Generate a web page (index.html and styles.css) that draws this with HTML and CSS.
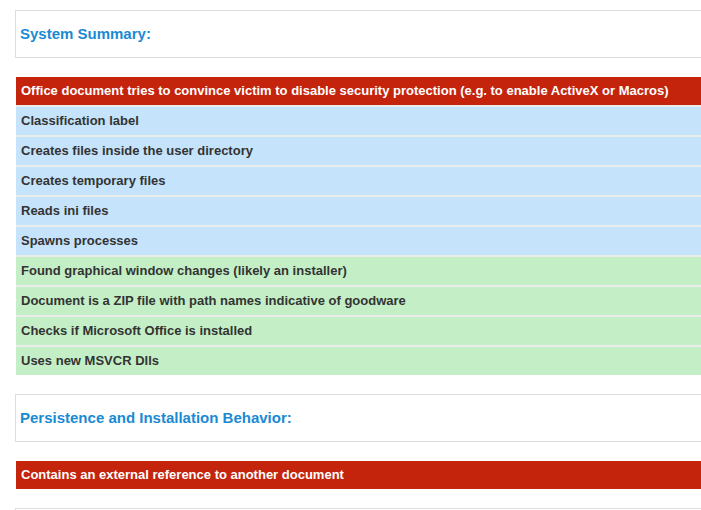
FILE: index.html
```html
<!DOCTYPE html>
<html>
<head>
<meta charset="utf-8">
<link rel="stylesheet" href="styles.css">
</head>
<body>
<div class="page">
  <div class="panel"><h2 class="panel-title">System Summary:</h2></div>
  <div class="sigs">
    <div class="sig sig-red">Office document tries to convince victim to disable security protection (e.g. to enable ActiveX or Macros)</div>
    <div class="sig sig-blue">Classification label</div>
    <div class="sig sig-blue">Creates files inside the user directory</div>
    <div class="sig sig-blue">Creates temporary files</div>
    <div class="sig sig-blue">Reads ini files</div>
    <div class="sig sig-blue">Spawns processes</div>
    <div class="sig sig-green">Found graphical window changes (likely an installer)</div>
    <div class="sig sig-green">Document is a ZIP file with path names indicative of goodware</div>
    <div class="sig sig-green">Checks if Microsoft Office is installed</div>
    <div class="sig sig-green">Uses new MSVCR Dlls</div>
  </div>
  <div class="panel"><h2 class="panel-title">Persistence and Installation Behavior:</h2></div>
  <div class="sigs">
    <div class="sig sig-red">Contains an external reference to another document</div>
  </div>
  <div class="panel"></div>
</div>
</body>
</html>
```

FILE: styles.css
```css
html, body {
  margin: 0;
  padding: 0;
  overflow: hidden;
  background: #ffffff;
}
body {
  font-family: "Liberation Sans", Arial, sans-serif;
}
.page {
  padding: 10px 0 0 15px;
  margin-right: -40px;
  display: flex;
  flex-direction: column;
  gap: 19px;
}
.panel {
  border: 1px solid #dddddd;
  background: #ffffff;
  height: 46px;
  display: flex;
  align-items: center;
  padding-left: 4px;
  box-sizing: content-box;
}
.panel-title {
  margin: 0 0 2px 0;
  font-size: 15px;
  font-weight: bold;
  color: #1a8ad4;
}
.sigs {
  display: flex;
  flex-direction: column;
  gap: 2px;
  margin-left: 1px;
  background: #e9ece9;
}
.sig {
  height: 28px;
  line-height: 28px;
  padding-left: 5px;
  font-size: 13px;
  font-weight: bold;
  color: #333333;
  white-space: nowrap;
}
.sig-red {
  background: #c4240c;
  color: #ffffff;
}
.sig-blue {
  background: #c5e3fb;
}
.sig-green {
  background: #c4efc6;
}
```
